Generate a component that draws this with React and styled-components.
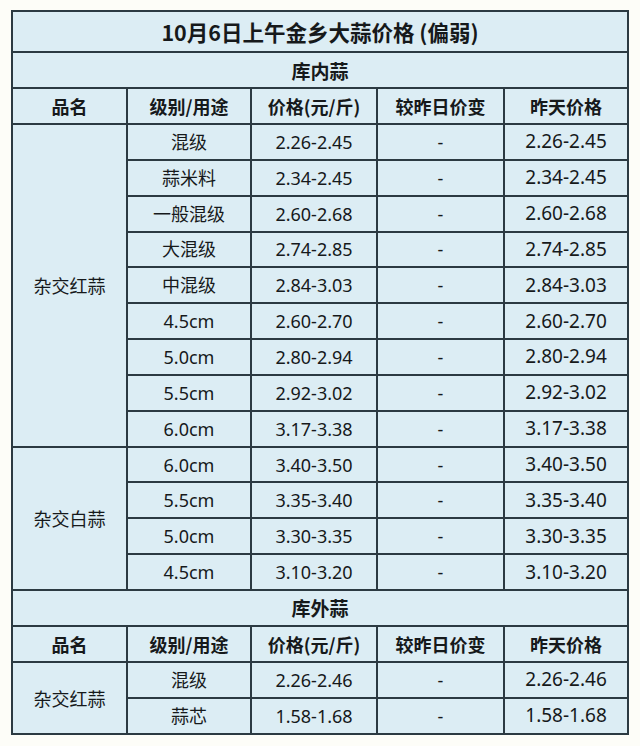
import React from "react";
import styled, { createGlobalStyle } from "styled-components";

const Global = createGlobalStyle`
  html, body { margin: 0; padding: 0; background: #fdfdf8; }
  body { font-family: "Noto Sans CJK SC", sans-serif; color: #16191b; }
`;

const Page = styled.div`
  padding: 10px 0 0 11px;
  min-height: 746px;
  box-sizing: border-box;
`;

const Table = styled.table`
  width: 618px;
  table-layout: fixed;
  border-collapse: collapse;
  background: #dcedf4;
  border: 2px solid #2c3a42;
`;

const Row = styled.tr`
  height: ${(p) => p.$h || 35.85}px;
`;

const Cell = styled.td`
  border: 2px solid #2c3a42;
  padding: 0;
  text-align: center;
  vertical-align: middle;
  font-family: ${(p) =>
    p.$latin
      ? '"Noto Sans", "Noto Sans CJK SC", sans-serif'
      : '"Noto Sans CJK SC", sans-serif'};
  font-size: ${(p) => p.$size || 17}px;
  font-weight: ${(p) => (p.$bold ? 700 : 400)};
  line-height: 1;
  white-space: nowrap;
`;

const widths = [115, 124, 126, 127, 124];

const inner = [
  ["混级", "2.26-2.45", "-", "2.26-2.45"],
  ["蒜米料", "2.34-2.45", "-", "2.34-2.45"],
  ["一般混级", "2.60-2.68", "-", "2.60-2.68"],
  ["大混级", "2.74-2.85", "-", "2.74-2.85"],
  ["中混级", "2.84-3.03", "-", "2.84-3.03"],
  ["4.5cm", "2.60-2.70", "-", "2.60-2.70"],
  ["5.0cm", "2.80-2.94", "-", "2.80-2.94"],
  ["5.5cm", "2.92-3.02", "-", "2.92-3.02"],
  ["6.0cm", "3.17-3.38", "-", "3.17-3.38"],
];
const white = [
  ["6.0cm", "3.40-3.50", "-", "3.40-3.50"],
  ["5.5cm", "3.35-3.40", "-", "3.35-3.40"],
  ["5.0cm", "3.30-3.35", "-", "3.30-3.35"],
  ["4.5cm", "3.10-3.20", "-", "3.10-3.20"],
];
const outer = [
  ["混级", "2.26-2.46", "-", "2.26-2.46"],
  ["蒜芯", "1.58-1.68", "-", "1.58-1.68"],
];

const headers = ["品名", "级别/用途", "价格(元/斤)", "较昨日价变", "昨天价格"];

function HeaderRow() {
  return (
    <Row $h={36}>
      {headers.map((h) => (
        <Cell key={h} $bold $size={18}>
          {h}
        </Cell>
      ))}
    </Row>
  );
}

function Group({ name, rows }) {
  return rows.map((r, i) => (
    <Row key={name + i}>
      {i === 0 && (
        <Cell rowSpan={rows.length} $size={18}>
          {name}
        </Cell>
      )}
      <Cell $latin $size={18}>{r[0]}</Cell>
      <Cell $latin $size={18}>{r[1]}</Cell>
      <Cell $latin $size={18}>{r[2]}</Cell>
      <Cell $latin $size={19}>{r[3]}</Cell>
    </Row>
  ));
}

export default function App() {
  return (
    <>
      <Global />
      <Page>
        <Table>
          <colgroup>
            {widths.map((w, i) => (
              <col key={i} style={{ width: w }} />
            ))}
          </colgroup>
          <tbody>
            <Row $h={41}>
              <Cell colSpan={5} $bold $size={21.5}>
                10月6日上午金乡大蒜价格 (偏弱)
              </Cell>
            </Row>
            <Row $h={36}>
              <Cell colSpan={5} $bold $size={19}>
                库内蒜
              </Cell>
            </Row>
            <HeaderRow />
            <Group name="杂交红蒜" rows={inner} />
            <Group name="杂交白蒜" rows={white} />
            <Row $h={36}>
              <Cell colSpan={5} $bold $size={19}>
                库外蒜
              </Cell>
            </Row>
            <HeaderRow />
            <Group name="杂交红蒜" rows={outer} />
          </tbody>
        </Table>
      </Page>
    </>
  );
}
